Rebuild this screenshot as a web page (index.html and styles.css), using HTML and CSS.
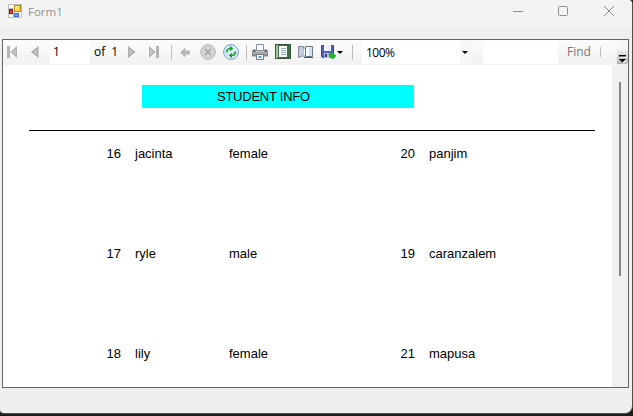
FILE: index.html
```html
<!DOCTYPE html>
<html lang="en">
<head>
<meta charset="utf-8">
<title>Form1</title>
<link rel="stylesheet" href="styles.css">
</head>
<body>
<div class="window">
  <header class="titlebar">
    <svg class="app-icon" width="14" height="14" viewBox="0 0 14 14">
      <rect x=".5" y=".5" width="13" height="13" fill="#fafafa" stroke="#bcbcbc"/>
      <path d="M.5 4.500h5M5.500 9v4.500M.5 10h5" stroke="#bcbcbc" fill="none"/>
      <rect x="6.500" y="1.500" width="6" height="6" fill="#ffd64a" stroke="#b88a10"/>
      <path d="M7 2h4l-4 4z" fill="#fff09a"/>
      <rect x="1.500" y="5.500" width="3" height="4" fill="#d8443a" stroke="#981c1c"/>
      <rect x="6.500" y="9.500" width="4" height="3" fill="#6aa0f4" stroke="#3f6fd0"/>
    </svg>
    <span class="title">Form1</span>
    <svg class="controls" width="102" height="12" viewBox="0 0 102 12" fill="none" stroke="#8f8f8f">
      <path d="M0 6.500h10"/>
      <rect x="45.500" y="1.500" width="9" height="9" rx="1"/>
      <path d="M91 1l10 10M101 1L91 11"/>
    </svg>
  </header>
  <main class="viewer">
    <div class="toolbar">
      <svg class="first" width="10" height="13" viewBox="0 0 10 13"><path d="M0 0h3v12H0z" fill="#b4b4b4"/><path d="M10 0v12L3.500 6z" fill="#b0b0b0"/><path d="M9 3v6L5.500 6z" fill="#c8c8c8"/></svg>
      <svg class="prev" width="8" height="13" viewBox="0 0 8 13"><path d="M7.500 0v12L0 6z" fill="#acacac"/><path d="M6 3v6L2.500 6z" fill="#c6c6c6"/></svg>
      <div class="page-input">1</div>
      <div class="pages"><span>of</span><span>1</span></div>
      <svg class="next" width="8" height="13" viewBox="0 0 8 13"><path d="M0 0v12l7.500-6z" fill="#acacac"/><path d="M1.500 3v6L5 6z" fill="#c6c6c6"/></svg>
      <svg class="last" width="10" height="13" viewBox="0 0 10 13"><path d="M7 0h3v12H7z" fill="#b4b4b4"/><path d="M0 0v12l6.500-6z" fill="#b0b0b0"/><path d="M1 3v6l3.500-3z" fill="#c8c8c8"/></svg>
      <i class="sep sep-a"></i>
      <svg class="back" width="10" height="9" viewBox="0 0 10 9"><path d="M5 .5V3h4.500v3H5v2.500L.7 4.500z" fill="#bababa" stroke="#a8a8a8" stroke-width=".8"/></svg>
      <svg class="stop" width="16" height="16" viewBox="0 0 16 16"><circle cx="8" cy="8" r="7.400" fill="#d2d2d2" stroke="#bcbcbc"/><path d="M5 5l6 6M11 5l-6 6" stroke="#e4e4e4" stroke-width="3.600"/><path d="M5 5l6 6M11 5l-6 6" stroke="#a8a8a8" stroke-width="2"/></svg>
      <svg class="refresh" width="16" height="16" viewBox="0 0 16 16"><circle cx="8" cy="8" r="7.400" fill="#d9eafb" stroke="#7f9fc4"/><path d="M3.700 8.500c0-3 1.300-4 4-4M12.300 7.500c0 3-1.300 4-4 4" fill="none" stroke="#24a32b" stroke-width="1.700"/><path d="M7 1.700l3.500 2.800L7 7.300zM9 8.700l-3.500 2.800L9 14.300z" fill="#24a32b"/></svg>
      <i class="sep sep-b"></i>
      <svg class="print" width="16" height="16" viewBox="0 0 16 16"><path d="M4.500.5h7v6h-7z" fill="#f5f8fc" stroke="#8a8f98"/><path d="M1 5.500h3v2h8v-2h3l1 2v5H0v-5z" fill="#84898f"/><path d="M1 8.500h14v1H1z" fill="#c8ccd1"/><path d="M1 6h2v1H1zM13 6h2v1h-2z" fill="#45494e"/><path d="M4.500 10.500h7v5h-7z" fill="#fff" stroke="#6d7887"/><path d="M6.500 12h3v2h-3z" fill="#459ee8"/></svg>
      <svg class="layout" width="16" height="15" viewBox="0 0 16 15"><rect x=".5" y=".5" width="15" height="14" fill="#78a878" stroke="#2f5938"/><path d="M1 1h2v13H1z" fill="#a5cda4"/><path d="M13 1h2v13h-2z" fill="#416d49"/><rect x="3.500" y="1.500" width="9" height="12" fill="#fff" stroke="#4b6650"/><path d="M6 4.500h5M6 6.500h5M6 8.500h5M6 10.500h5" stroke="#9aabc0"/></svg>
      <svg class="setup" width="16" height="14" viewBox="0 0 16 14"><path d="M.5 1.500h5v9l-5 2z" fill="#c3cede" stroke="#7c899c"/><path d="M5.500 3.500l2-1v8l-2 1" fill="#fff" stroke="#78869b"/><path d="M7.500 1.500h7v10h-7z" fill="#f8fbff" stroke="#687990"/><path d="M11 2h3v9h-3z" fill="#d4e0ed"/><path d="M6 12.500h9" stroke="#55575f" fill="none"/></svg>
      <svg class="save" width="16" height="16" viewBox="0 0 16 16"><path d="M.5 1.500h12v12h-11l-1-1z" fill="#5660b6" stroke="#3d438e"/><path d="M3 1h7v6H3z" fill="#edf1ff"/><path d="M3 9h6v5H3z" fill="#b9c0dd"/><path d="M4 10h2v3H4z" fill="#353b75"/><path d="M7.500 9.500h3V8l5 3.700-4 4-1-2h-2z" fill="#24b52b"/></svg>
      <svg class="caret" width="6" height="3" viewBox="0 0 6 3"><path d="M0 0h6L3 3z"/></svg>
      <i class="sep sep-c"></i>
      <div class="zoom"><span>100%</span><b><svg width="6" height="3" viewBox="0 0 6 3"><path d="M0 0h6L3 3z"/></svg></b></div>
      <div class="search"></div>
      <span class="find">Find</span>
      <i class="sep sep-d"></i>
      <div class="overflow"><svg width="9" height="9" viewBox="0 0 9 9"><path d="M2 1h7v1.400H2zM3 5h6L5.500 8.500z" fill="#fff"/><path d="M1 0h7v1.400H1zM1 4h7L4.500 7.500z"/></svg></div>
    </div>
    <div class="content">
      <section class="report">
        <h1>STUDENT INFO</h1>
        <div class="rule"></div>
        <div class="row"><span class="num">16</span><span>jacinta</span><span>female</span><span class="num">20</span><span>panjim</span></div>
        <div class="row"><span class="num">17</span><span>ryle</span><span>male</span><span class="num">19</span><span>caranzalem</span></div>
        <div class="row"><span class="num">18</span><span>lily</span><span>female</span><span class="num">21</span><span>mapusa</span></div>
      </section>
      <div class="scrollbar"><div class="thumb"></div></div>
    </div>
  </main>
</div>
</body>
</html>
```
FILE: styles.css
```css
* { box-sizing: border-box; }
html, body { margin: 0; height: 416px; overflow: hidden; background: #1c1c1c; }
body { color: #000; }
svg { display: block; flex: none; }
.window {
  width: 632px;
  height: 413px;
  background: #efefef;
  border-radius: 0 4px 7px 4px;
  overflow: hidden;
  box-shadow: 0 0 0 1px #505050;
}
.titlebar {
  height: 27px;
  padding-left: 8px;
  display: flex;
  align-items: flex-start;
  background: #f3f3f3;
  font: 11.5px/16px "Open Sans", sans-serif;
  color: #929292;
}
.app-icon { margin-top: 4px; }
.title { width: 485px; padding: 4px 0 0 6px; }
.controls { margin: 5px 0 0 6px; }
.viewer {
  width: 627px;
  height: 349px;
  margin: 12px 0 0 2px;
  border: 1px solid #646464;
  background: #fff;
}
.toolbar {
  height: 25px;
  display: flex;
  align-items: flex-start;
  background: linear-gradient(#fcfcfc, #f1f1f1);
  font: 12px/16px "Open Sans", sans-serif;
}
.toolbar > * { flex: none; }
.first { margin: 6px 0 0 4px; }
.prev { margin: 6px 0 0 14px; }
.page-input { width: 40px; height: 23px; margin: 1px 0 0 11px; padding: 3px 0 0 3px; background: #fff; }
.pages { width: 34px; margin: 4px 0 0 4px; display: flex; gap: 6px; }
.next { margin: 6px 0 0 0; }
.last { margin: 6px 0 0 13px; }
.sep { width: 1px; height: 15px; margin-top: 5px; background: #bdbdbd; }
.sep-a { margin-left: 12px; }
.back { margin: 8px 0 0 8px; }
.stop { margin: 4px 0 0 10px; }
.refresh { margin: 4px 0 0 7px; }
.sep-b { margin-left: 7px; }
.print { margin: 4px 0 0 5px; }
.layout { margin: 4px 0 0 7px; }
.setup { margin: 5px 0 0 7px; }
.save { margin: 4px 0 0 7px; }
.caret { margin: 11px 0 0 0; }
.sep-c { margin-left: 9px; }
.zoom { width: 110px; height: 23px; margin: 1px 0 0 9px; display: flex; justify-content: space-between; background: #fff; }
.zoom span { padding: 4px 0 0 4px; letter-spacing: -.5px; }
.zoom b { width: 12px; padding: 10px 0 0 2px; background: #f7f7f7; }
.search { width: 75px; height: 23px; margin: 1px 0 0 11px; background: #fff; }
.find { width: 33px; padding: 4px 0 0 9px; color: #777; }
.sep-d { height: 10px; margin: 7px 0 0 9px; }
.overflow {
  width: 11px;
  height: 24px;
  margin-left: auto;
  padding: 15px 0 0 1px;
  background: linear-gradient(#f7f7f7 35%, #b0b0b0);
  border-radius: 0 0 3px 0;
}
.content { height: 322px; display: flex; }
.report {
  width: 609px;
  padding: 20px 17px 0 26px;
  overflow: hidden;
  font: 13px/16px "Liberation Sans", Arial, sans-serif;
}
h1 {
  width: 272px;
  height: 23px;
  margin: 0 0 0 113px;
  padding: 4px 0 0 75px;
  background: #0ff;
  font: inherit;
  letter-spacing: -.25px;
}
.rule { height: 1px; margin-top: 22px; background: #000; }
.row {
  height: 100px;
  padding-top: 15px;
  display: grid;
  grid-template-columns: 92px 80px 157px 15px 1fr;
  column-gap: 14px;
}
.row .num { text-align: right; }
.scrollbar { width: 16px; padding: 17px 0 0 7px; background: #f0f0f0; }
.thumb { width: 2px; height: 194px; background: #858585; }
```
